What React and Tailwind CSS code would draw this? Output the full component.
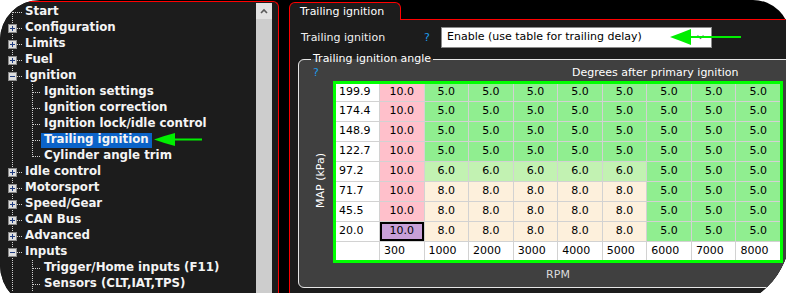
import React from "react";

const FONT = "font-['DejaVu_Sans',sans-serif]";

const tree = [
  { t: "Start", l: 1, first: true },
  { t: "Configuration", l: 1, exp: "+" },
  { t: "Limits", l: 1, exp: "+" },
  { t: "Fuel", l: 1, exp: "+" },
  { t: "Ignition", l: 1, exp: "-" },
  { t: "Ignition settings", l: 2 },
  { t: "Ignition correction", l: 2 },
  { t: "Ignition lock/idle control", l: 2 },
  { t: "Trailing ignition", l: 2, sel: true },
  { t: "Cylinder angle trim", l: 2, last: true },
  { t: "Idle control", l: 1, exp: "+" },
  { t: "Motorsport", l: 1, exp: "+" },
  { t: "Speed/Gear", l: 1, exp: "+" },
  { t: "CAN Bus", l: 1, exp: "+" },
  { t: "Advanced", l: 1, exp: "+" },
  { t: "Inputs", l: 1, exp: "-" },
  { t: "Trigger/Home inputs (F11)", l: 2 },
  { t: "Sensors (CLT,IAT,TPS)", l: 2 },
];

const DOT = "#cfcfcf";

function Gutter({ l, exp, first, last }) {
  const w = l === 1 ? 25 : 41;
  return (
    <svg width={w} height={16} className="shrink-0" shapeRendering="crispEdges">
      <line x1={12.5} y1={first ? 8 : 0} x2={12.5} y2={16} stroke={DOT} strokeDasharray="1 1" />
      {l === 1 && (
        <line x1={exp ? 17 : 13} y1={8.5} x2={23} y2={8.5} stroke={DOT} strokeDasharray="1 1" />
      )}
      {l === 2 && (
        <>
          <line x1={32.5} y1={0} x2={32.5} y2={last ? 9 : 16} stroke={DOT} strokeDasharray="1 1" />
          <line x1={33} y1={8.5} x2={41} y2={8.5} stroke={DOT} strokeDasharray="1 1" />
        </>
      )}
      {exp && (
        <g>
          <rect x={8.5} y={4.5} width={8} height={8} fill="#dedede" stroke="#8a8a8a" />
          <line x1={10} y1={8.5} x2={15} y2={8.5} stroke="#1f3c80" />
          {exp === "+" && <line x1={12.5} y1={6} x2={12.5} y2={11} stroke="#1f3c80" />}
        </g>
      )}
    </svg>
  );
}

const rows = [
  ["199.9", "10.0", "5.0", "5.0", "5.0", "5.0", "5.0", "5.0", "5.0", "5.0"],
  ["174.4", "10.0", "5.0", "5.0", "5.0", "5.0", "5.0", "5.0", "5.0", "5.0"],
  ["148.9", "10.0", "5.0", "5.0", "5.0", "5.0", "5.0", "5.0", "5.0", "5.0"],
  ["122.7", "10.0", "5.0", "5.0", "5.0", "5.0", "5.0", "5.0", "5.0", "5.0"],
  ["97.2", "10.0", "6.0", "6.0", "6.0", "6.0", "6.0", "5.0", "5.0", "5.0"],
  ["71.7", "10.0", "8.0", "8.0", "8.0", "8.0", "8.0", "5.0", "5.0", "5.0"],
  ["45.5", "10.0", "8.0", "8.0", "8.0", "8.0", "8.0", "5.0", "5.0", "5.0"],
  ["20.0", "10.0", "8.0", "8.0", "8.0", "8.0", "8.0", "5.0", "5.0", "5.0"],
];
const rpm = ["300", "1000", "2000", "3000", "4000", "5000", "6000", "7000", "8000"];

function cellBg(v) {
  if (v === "10.0") return "bg-[#ffc0cb]";
  if (v === "6.0") return "bg-[#c2f2b2]";
  if (v === "8.0") return "bg-[#fdf0dc]";
  return "bg-[#90ee90]";
}

function Arrow({ className, w, h }) {
  return (
    <svg width={w} height={h} className={className}>
      <path d={`M0 ${h / 2} Q11 ${h / 2 - 4} 21 0 L21 ${h} Q11 ${h / 2 + 4} 0 ${h / 2} Z`} fill="#00ee00" />
      <rect x={20} y={h / 2 - 1} width={w - 20} height={2} fill="#00ee00" />
    </svg>
  );
}

export default function App() {
  return (
    <div className={`relative w-[786px] h-[293px] overflow-hidden bg-white ${FONT}`}>
      <div className="flex w-[790px] h-[308px] bg-black overflow-hidden rounded-tl-[40px] rounded-tr-[37px] rounded-bl-[43px] rounded-br-[75px]">
        {/* left tree panel */}
        <div className="mt-[1px] flex w-[279px] shrink-0 border-t border-r border-[#ff0000] rounded-tr-[6px] bg-[#1c1c1c]">
          <div className="w-[256px] pt-[2px] text-[11.8px] font-bold text-[#f4f4f4]">
            {tree.map((n, i) => (
              <div key={i} className="flex h-[16px] items-center whitespace-nowrap">
                <Gutter l={n.l} exp={n.exp} first={n.first} last={n.last} />
                {n.l === 2 ? (
                  <span className={`flex h-[15px] items-center px-[3px] ${n.sel ? "bg-[#0b63c8]" : ""}`}>{n.t}</span>
                ) : (
                  <span>{n.t}</span>
                )}
              </div>
            ))}
          </div>
          <div className="mt-[1px] flex w-[16px] flex-col bg-[#cdcdcd]">
            <div className="flex h-[16px] items-center justify-center bg-[#e2e2e2]">
              <svg width="8" height="6">
                <polyline points="1,5 4,2 7,5" fill="none" stroke="#5a5a5a" strokeWidth="1.6" />
              </svg>
            </div>
          </div>
        </div>

        {/* gap */}
        <div className="w-[10px] shrink-0" />

        {/* right panel */}
        <div className="flex w-[501px] shrink-0 flex-col">
          <div className="relative z-10 mt-[2px] h-[18px] w-[112px] rounded-t-[6px] border border-b-0 border-[#ff0000] bg-[#1c1c1c] pl-[10px] text-[11px] leading-[17px] text-white">
            Trailing ignition
          </div>
          <div className="-mt-px flex-1 border-t border-l border-[#ff0000] bg-[#1c1c1c]">
            <div className="mt-[7px] flex h-[21px] items-center pl-[11px] text-[11px]">
              <span className="w-[123px] pt-[1px] text-[#f0f0f0]">Trailing ignition</span>
              <span className="w-[17px] pt-[1px] text-[#1e9be8]">?</span>
              <div className="flex h-[21px] w-[271px] items-center justify-between border border-[#8a8a8a] bg-white pl-[5px] pr-[7px] text-black">
                <span>Enable (use table for trailing delay)</span>
                <svg width="7" height="5">
                  <polyline points="0.5,0.5 3.5,3.5 6.5,0.5" fill="none" stroke="#707070" strokeWidth="1.2" />
                </svg>
              </div>
            </div>

            <fieldset className="mt-[4px] ml-[8px] w-[500px] rounded-[6px] border border-[#e6e6e6] bg-[#404040] text-[11px]">
              <legend className="ml-[12px] px-[2px] leading-[14px] text-white">Trailing ignition angle</legend>
              <div className="flex">
                <div className="flex w-[34px] flex-col">
                  <span className="h-[14px] pl-[14px] leading-[14px] text-[#1e9be8]">?</span>
                  <span className="mt-[73px] ml-[15px] rotate-180 leading-[14px] text-white [writing-mode:vertical-rl]">MAP (kPa)</span>
                </div>
                <div className="flex w-[450px] flex-col">
                  <div className="h-[14px] pl-[239px] leading-[14px] text-white whitespace-nowrap">Degrees after primary ignition</div>
                  <div className="mt-[1px] border-[3px] border-[#00ff00]">
                    <div className="grid grid-cols-[43px_repeat(9,1fr)] grid-rows-[17px_repeat(7,19px)_18px] gap-[1px] bg-[#d2d2d2] text-black">
                      {rows.map((r, ri) =>
                        r.map((v, ci) =>
                          ci === 0 ? (
                            <div key={`${ri}-${ci}`} className="flex items-center bg-white pl-[3px]">{v}</div>
                          ) : ri === 7 && ci === 1 ? (
                            <div key={`${ri}-${ci}`} className="flex items-center justify-center border-2 border-black bg-[#c8a0d8]">{v}</div>
                          ) : (
                            <div key={`${ri}-${ci}`} className={`flex items-center justify-center ${cellBg(v)}`}>{v}</div>
                          )
                        )
                      )}
                      <div className="bg-white" />
                      {rpm.map((v) => (
                        <div key={v} className="flex items-center bg-white pl-[4px]">{v}</div>
                      ))}
                    </div>
                  </div>
                  <div className="flex h-[24px] items-center justify-center text-[#dcdcdc]">RPM</div>
                </div>
              </div>
            </fieldset>
          </div>
        </div>
      </div>

      {/* green annotation arrows */}
      <Arrow className="absolute left-[154px] top-[133px]" w={48} h={13} />
      <Arrow className="absolute left-[670px] top-[29px]" w={71} h={16} />
    </div>
  );
}
